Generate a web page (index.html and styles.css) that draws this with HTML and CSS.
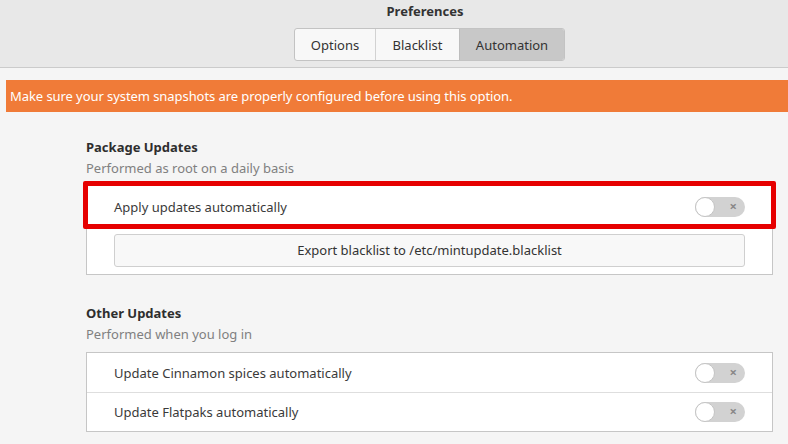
FILE: index.html
```html
<!DOCTYPE html>
<html>
<head>
<meta charset="utf-8">
<link rel="stylesheet" href="styles.css">
</head>
<body>
<div class="header">
  <div class="title">Preferences</div>
  <div class="tabs">
    <div class="tab">Options</div>
    <div class="tab">Blacklist</div>
    <div class="tab active">Automation</div>
  </div>
</div>
<div class="main">
  <div class="banner">Make sure your system snapshots are properly configured before using this option.</div>
  <div class="content">
    <div class="section first">
      <div class="heading">Package Updates</div>
      <div class="sub">Performed as root on a daily basis</div>
      <div class="frame">
        <div class="row tall highlighted">
          <span class="label">Apply updates automatically</span>
          <span class="switch"><span class="knob"></span><span class="x">×</span></span>
          <div class="redbox"></div>
        </div>
        <div class="row buttonrow">
          <div class="button">Export blacklist to /etc/mintupdate.blacklist</div>
        </div>
      </div>
    </div>
    <div class="section second">
      <div class="heading">Other Updates</div>
      <div class="sub">Performed when you log in</div>
      <div class="frame">
        <div class="row">
          <span class="label">Update Cinnamon spices automatically</span>
          <span class="switch"><span class="knob"></span><span class="x">×</span></span>
        </div>
        <div class="row divided">
          <span class="label">Update Flatpaks automatically</span>
          <span class="switch"><span class="knob"></span><span class="x">×</span></span>
        </div>
      </div>
    </div>
  </div>
</div>
</body>
</html>
```
FILE: styles.css
```css
html, body {
  margin: 0;
  padding: 0;
}
body {
  width: 788px;
  height: 444px;
  overflow: hidden;
  background: #f5f5f5;
  font-family: "Noto Sans", "Open Sans", sans-serif;
  font-size: 13px;
  color: #3a3a3a;
}
.header {
  height: 67px;
  background: #e8e8e8;
  border-bottom: 1px solid #cbcbcb;
  display: flex;
  flex-direction: column;
  align-items: center;
}
.title {
  margin-left: 62px;
  margin-top: 1px;
  height: 20px;
  line-height: 20px;
  font-weight: bold;
  color: #333;
}
.tabs {
  margin-top: 7px;
  margin-left: 71px;
  display: flex;
  height: 31px;
  border: 1px solid #c3c3c3;
  border-radius: 3px;
  overflow: hidden;
  background: #f8f8f8;
}
.tab {
  display: flex;
  align-items: center;
  justify-content: center;
  color: #333;
}
.tab:nth-child(1) { width: 80px; border-right: 1px solid #d2d2d2; }
.tab:nth-child(2) { width: 83px; border-right: 1px solid #bdbdbd; }
.tab:nth-child(3) { width: 104px; }
.tab.active {
  background: #c8c8c8;
  color: #333;
}
.main {
  padding-top: 12px;
}
.banner {
  margin-left: 6px;
  height: 32px;
  line-height: 32px;
  background: #f07b38;
  color: #fff;
  padding-left: 4px;
  letter-spacing: -0.07px;
}
.content {
  margin-left: 86px;
  width: 687px;
}
.section.first {
  margin-top: 25px;
}
.section.second {
  margin-top: 28px;
}
.heading {
  height: 21px;
  line-height: 21px;
  font-weight: bold;
  color: #2e2e2e;
}
.sub {
  height: 21px;
  line-height: 21px;
  color: #808080;
}
.frame {
  margin-top: 4px;
  background: #fff;
  border: 1px solid #c6c6c6;
}
.second .frame {
  margin-top: 7px;
}
.row {
  position: relative;
  height: 39px;
  display: flex;
  align-items: center;
  justify-content: space-between;
  padding: 0 27px 0 27px;
}
.row.divided {
  border-top: 1px solid #dedede;
  height: 38px;
}
.row.tall {
  height: 45px;
}
.row.buttonrow {
  height: 45px;
  align-items: flex-start;
  padding-top: 5px;
  box-sizing: border-box;
}
.label {
  color: #3a3a3a;
}
.switch {
  position: relative;
  width: 50px;
  height: 20px;
  border-radius: 10px;
  background: #d2d2d2;
  display: block;
}
.knob {
  position: absolute;
  left: 0;
  top: 0;
  width: 18px;
  height: 18px;
  border-radius: 50%;
  background: #fff;
  border: 1px solid #c4c4c4;
}
.x {
  position: absolute;
  right: 8px;
  top: 0;
  line-height: 19px;
  font-size: 13px;
  font-weight: bold;
  color: #888;
}
.button {
  flex: 1;
  height: 31px;
  line-height: 31px;
  text-align: center;
  background: #f8f8f8;
  border: 1px solid #cfcfcf;
  border-radius: 3px;
  color: #333;
}
.redbox {
  position: absolute;
  left: -4px;
  right: -4px;
  top: -3px;
  bottom: 0;
  border: 5px solid #e60000;
  border-radius: 2px;
  pointer-events: none;
}
```
